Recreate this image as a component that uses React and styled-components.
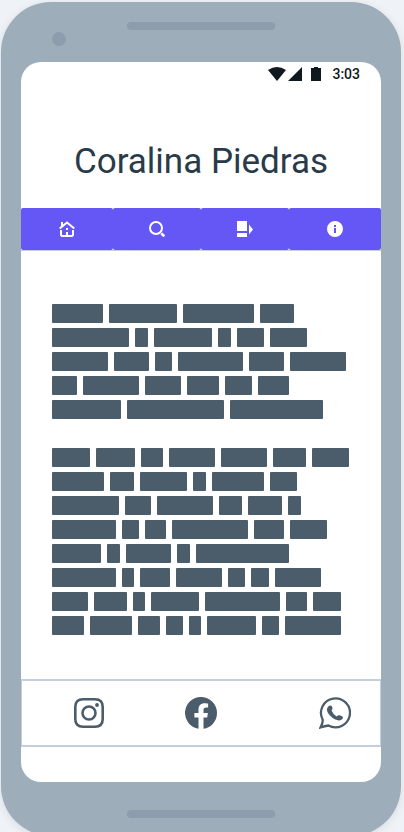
import React from "react";
import styled, { createGlobalStyle } from "styled-components";

const GlobalStyle = createGlobalStyle`
  *, *::before, *::after { box-sizing: border-box; }
  body {
    margin: 0;
    background: #eff3f7;
    font-family: Roboto, "Liberation Sans", sans-serif;
  }
`;

const Page = styled.div`
  min-height: 100vh;
  padding: 2px 3px 0 1px;
  overflow: hidden;
`;

const Phone = styled.div`
  display: flex;
  flex-direction: column;
  min-height: calc(100vh + 2px);
  margin-bottom: -4px;
  padding: 0 20px;
  border-radius: 50px;
  background: #9eadba;
  box-shadow: 0 2px 8px rgba(60, 60, 60, 0.12);
`;

const Forehead = styled.div`
  display: grid;
  grid-template-columns: 1fr 148px 1fr;
  height: 60px;
  padding-top: 20px;
`;

const Camera = styled.span`
  width: 14px;
  height: 14px;
  margin: 10px 0 0 31px;
  border-radius: 50%;
  background: #8e9dad;
`;

const Speaker = styled.span`
  width: 148px;
  height: 8px;
  border-radius: 4px;
  background: #8e9dad;
`;

const Chin = styled.div`
  display: flex;
  justify-content: center;
  height: 54px;
  padding-top: 28px;
`;

const Screen = styled.div`
  display: flex;
  flex: 1;
  flex-direction: column;
  padding-bottom: 35px;
  border-radius: 20px;
  background: #fff;
  overflow: hidden;
`;

const StatusBar = styled.div`
  display: flex;
  align-items: center;
  justify-content: flex-end;
  height: 24px;
  padding-right: 21px;
  color: #101820;
  font-size: 14px;
  font-weight: 500;
  line-height: 24px;
`;

const StatusIcons = styled.svg`
  width: 53px;
  height: 14px;
  margin-right: 11px;
  fill: currentColor;
`;

const Title = styled.h1`
  margin: 53px 0 23px;
  color: #293a48;
  font-size: 35px;
  font-weight: 400;
  line-height: 46px;
  text-align: center;
`;

const Nav = styled.nav`
  display: flex;
  border-bottom: 1px solid #c3cfdb;
`;

const NavButton = styled.button`
  display: flex;
  flex: ${(p) => (p.$outer ? 23 : 22)} 1 0;
  align-items: center;
  justify-content: center;
  height: 42px;
  padding: 0;
  border: 0;
  border-radius: 2px;
  background: #6557f5;
  color: #fff;
  cursor: pointer;
`;

const NavIcon = styled.svg`
  width: 16px;
  height: 16px;
  fill: none;
  stroke: currentColor;
  stroke-width: 2;
`;

const Article = styled.main`
  display: flex;
  flex: 1;
  flex-direction: column;
  gap: 29px;
  padding: 53px 31px 44px;
`;

const Paragraph = styled.div`
  display: flex;
  flex-direction: column;
  gap: 5px;
`;

const Line = styled.div`
  display: flex;
  gap: 6px;
`;

const Word = styled.span`
  flex: none;
  width: ${(p) => p.$width}px;
  height: 19px;
  border-radius: 1px;
  background: #4b5c6b;
`;

const Footer = styled.footer`
  display: grid;
  grid-template-columns: 1fr auto 1fr;
  align-items: center;
  height: 68px;
  border: solid #c3cfdb;
  border-width: 2px 1px;
`;

const SocialLink = styled.a`
  display: flex;
  color: #4b5c6b;

  &:first-child { margin-left: 51px; justify-self: start; }
  &:last-child { margin-right: 29px; justify-self: end; }

  svg {
    width: 32px;
    height: 32px;
  }
`;

const paragraphs = [
  [
    [51, 68, 71, 34],
    [77, 13, 58, 13, 27, 37],
    [56, 35, 17, 65, 35, 56],
    [25, 56, 36, 32, 27, 31],
    [69, 97, 93],
  ],
  [
    [38, 39, 22, 46, 46, 33, 37],
    [52, 24, 47, 13, 52, 27],
    [67, 26, 56, 23, 34, 13],
    [64, 17, 21, 76, 30, 37],
    [49, 13, 45, 13, 93],
    [64, 12, 30, 46, 17, 18, 46],
    [36, 33, 12, 48, 75, 21, 28],
    [32, 42, 22, 17, 12, 49, 17, 56],
  ],
];

const navItems = [
  {
    label: "Home",
    outer: true,
    icon: (
      <>
        <path d="M0.7 7.5 8 1.5l7.3 6M3 6V1" />
        <path d="M2 9v5l1 1h10l1-1V9" />
        <path d="M8 7v2M8 11v4" />
      </>
    ),
  },
  {
    label: "Search",
    icon: (
      <>
        <circle cx="7" cy="7" r="6" />
        <path d="m12.3 12.3 3 3" strokeWidth="2.6" />
      </>
    ),
  },
  {
    label: "Gallery",
    icon: <path fill="currentColor" stroke="none" d="M0 0h10v10H0zM0 12h10v4H0zM12 3.5l4 5-4 5z" />,
  },
  {
    label: "Information",
    outer: true,
    icon: (
      <path
        fill="currentColor"
        stroke="none"
        fillRule="evenodd"
        d="M8 0a8 8 0 1 0 0 16A8 8 0 0 0 8 0zM7 4h2v2H7zM7 7h2v5H7z"
      />
    ),
  },
];

const InstagramIcon = () => (
  <svg viewBox="0 0 32 32" fill="none" stroke="currentColor" strokeWidth="2.6" aria-hidden="true">
    <path d="M10 2.3h12q7.7 0 7.7 7.7v12q0 7.7-7.7 7.7H10q-7.7 0-7.7-7.7V10q0-7.7 7.7-7.7z" />
    <circle cx="16" cy="16" r="6.5" />
    <circle cx="24" cy="8" r="1.9" fill="currentColor" stroke="none" />
  </svg>
);

const FacebookIcon = () => (
  <svg viewBox="0 0 32 32" fill="currentColor" aria-hidden="true">
    <path d="M32 16a16 16 0 1 0-18.5 15.8V20.6H9.4V16h4.1v-3.5c0-4 2.4-6.2 6-6.2 1.8 0 3.6.3 3.6.3v4h-2c-2 0-2.6 1.2-2.6 2.5V16h4.4l-.7 4.6h-3.7v11.2A16 16 0 0 0 32 16z" />
  </svg>
);

const WhatsappIcon = () => (
  <svg viewBox="0 0 32 32" fill="currentColor" aria-hidden="true">
    <path
      fill="none"
      stroke="currentColor"
      strokeWidth="2.3"
      d="M1.6 30.4Q4 26 3.7 22.7A14.5 14.5 0 1 1 9.4 28.5Q6 29 1.6 30.4z"
    />
    <path d="M8.6 10.5q1-2 3-1.9 1.2 0 1.8 2 .5 1.7-.8 3 1.2 3.5 5 5.9 1.4-1.7 3-1.2 3.4.8 3.4 2 0 1.5-1.6 2.5-1.8 1-4.5.3C12 21 7.5 15.5 8 12z" />
  </svg>
);

export default function App() {
  return (
    <>
      <GlobalStyle />
      <Page>
        <Phone>
          <Forehead>
            <Camera />
            <Speaker />
          </Forehead>
          <Screen>
            <StatusBar>
              <StatusIcons viewBox="0 0 53 14" aria-hidden="true">
                <path d="M0 3Q9-3 18 3L9 14zM34 0v14H20zM43 1h3V0h4v1h3v13h-10z" />
              </StatusIcons>
              <time>3:03</time>
            </StatusBar>
            <Title>Coralina Piedras</Title>
            <Nav>
              {navItems.map((item) => (
                <NavButton key={item.label} type="button" aria-label={item.label} $outer={item.outer}>
                  <NavIcon viewBox="0 0 16 16" aria-hidden="true">{item.icon}</NavIcon>
                </NavButton>
              ))}
            </Nav>
            <Article>
              {paragraphs.map((lines, p) => (
                <Paragraph key={p}>
                  {lines.map((words, l) => (
                    <Line key={l}>
                      {words.map((width, w) => (
                        <Word key={w} $width={width} />
                      ))}
                    </Line>
                  ))}
                </Paragraph>
              ))}
            </Article>
            <Footer>
              <SocialLink href="#instagram" aria-label="Instagram"><InstagramIcon /></SocialLink>
              <SocialLink href="#facebook" aria-label="Facebook"><FacebookIcon /></SocialLink>
              <SocialLink href="#whatsapp" aria-label="WhatsApp"><WhatsappIcon /></SocialLink>
            </Footer>
          </Screen>
          <Chin>
            <Speaker />
          </Chin>
        </Phone>
      </Page>
    </>
  );
}
